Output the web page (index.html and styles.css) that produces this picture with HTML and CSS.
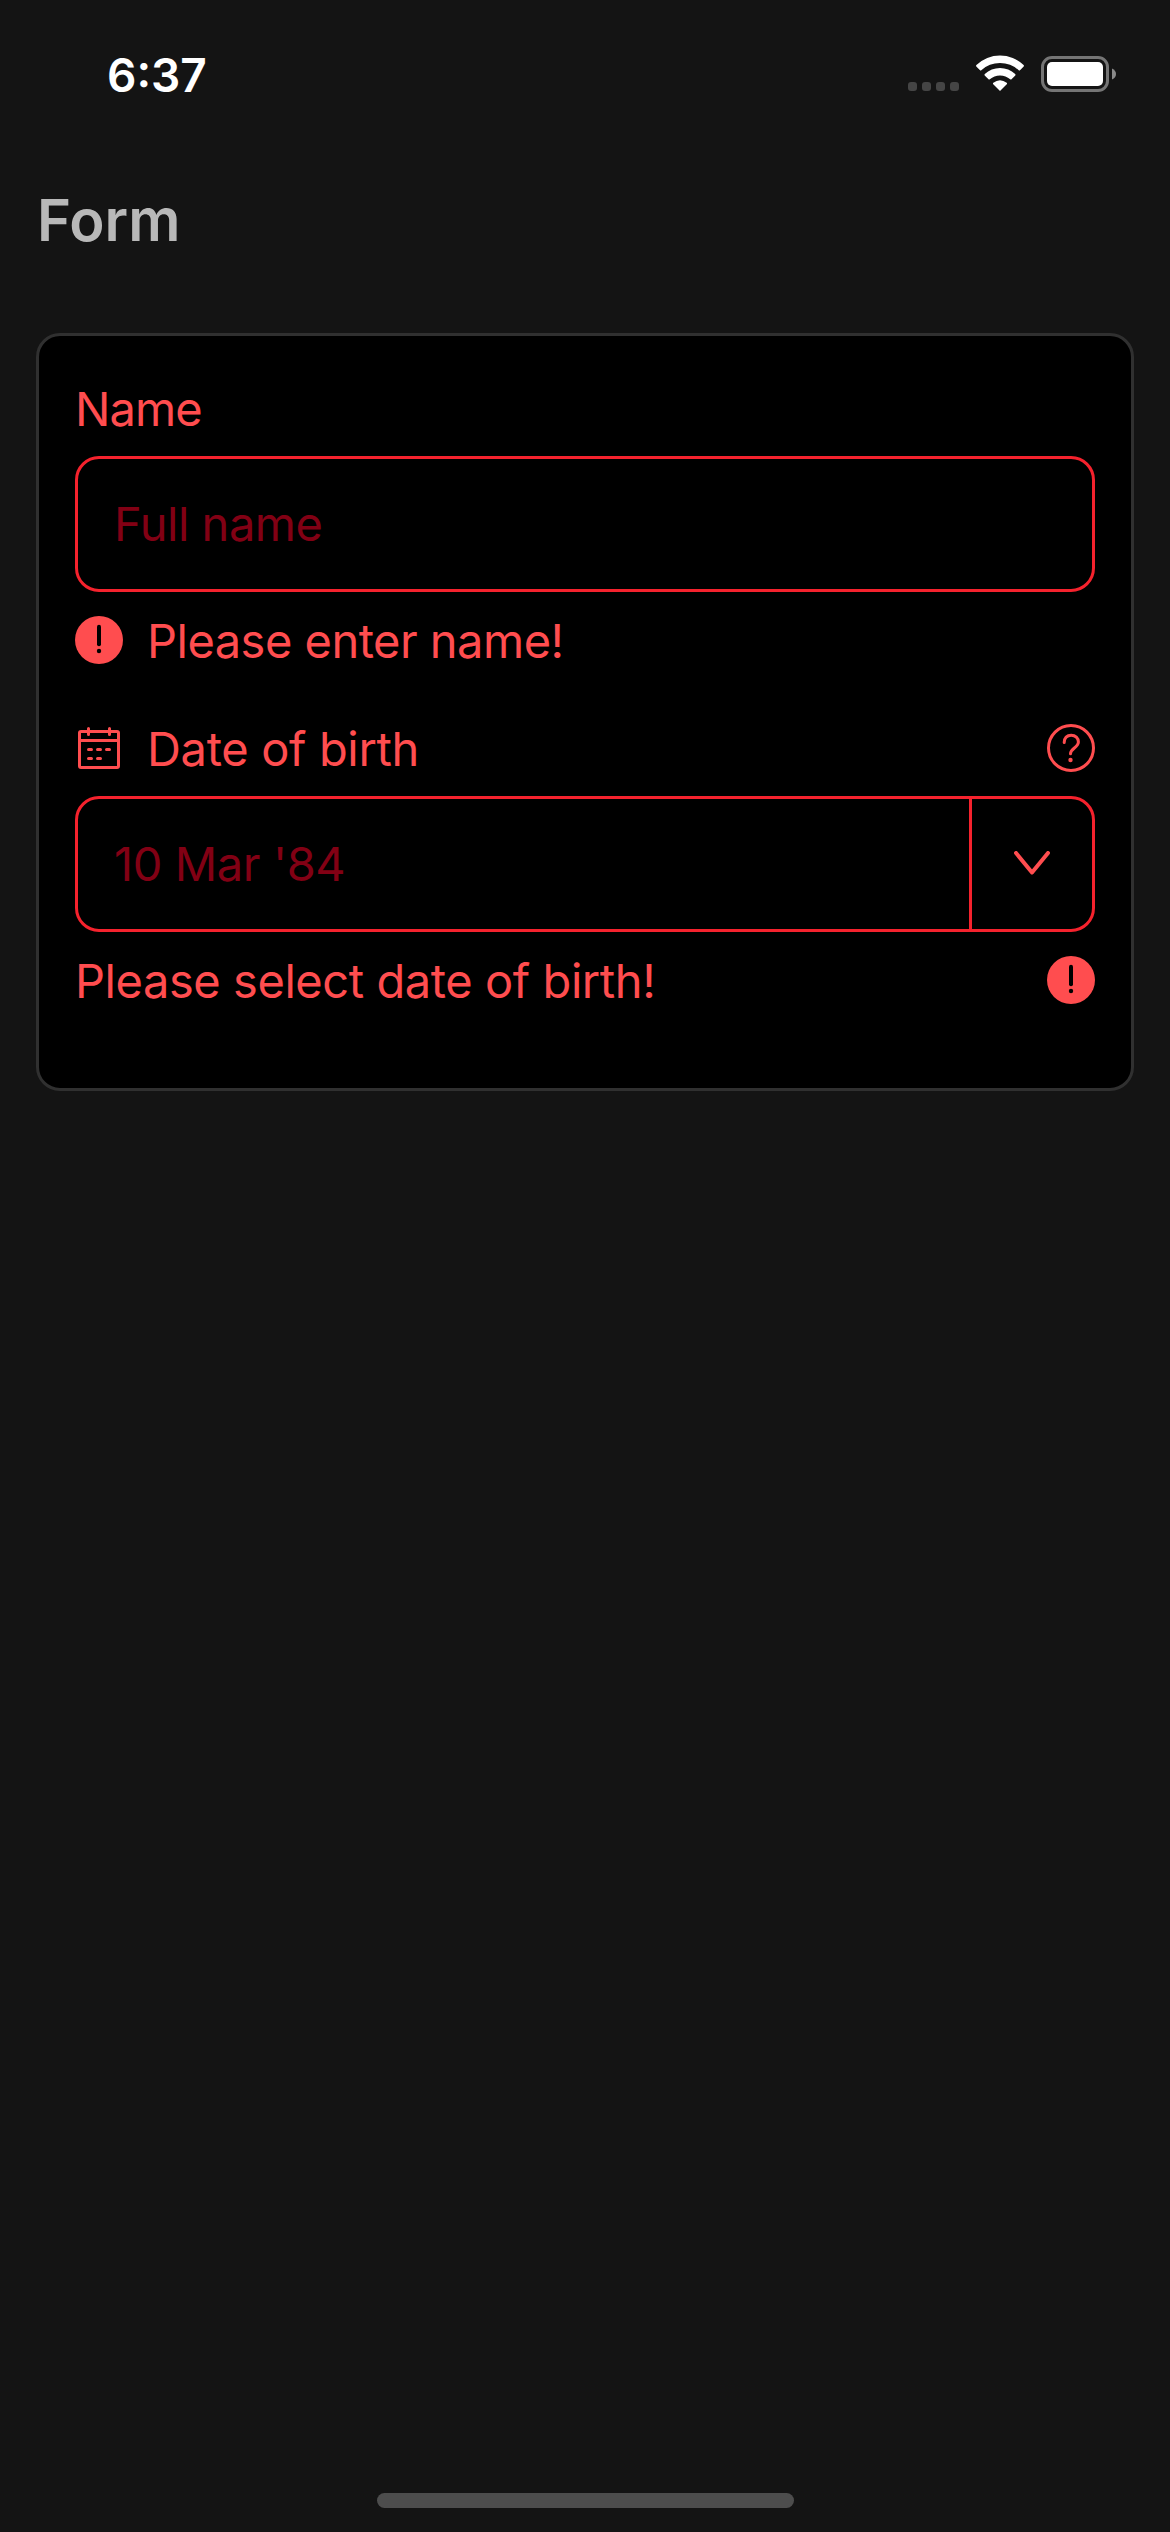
FILE: index.html
```html
<!DOCTYPE html>
<html lang="en">
<head>
<meta charset="utf-8">
<title>Form</title>
<link rel="stylesheet" href="styles.css">
</head>
<body>
<div class="screen">
  <header class="status-bar">
    <div class="time">6:37</div>
    <div class="status-icons">
      <svg class="signal" viewBox="0 0 51 9"><g fill="#454545"><rect width="9" height="9" rx="3"/><rect x="14" width="9" height="9" rx="3"/><rect x="28" width="9" height="9" rx="3"/><rect x="42" width="9" height="9" rx="3"/></g></svg>
      <svg class="wifi" viewBox="0 0 48 36"><g fill="#fff"><path d="M24 36 17 28.9Q16.700 28.300 17.300 27.800Q24 22.600 30.700 27.800Q31.300 28.300 31 28.900Z"/><path d="M8.700 20.500Q8.100 19.800 8.800 19.100A22 22 0 0 1 39.200 19.100Q39.900 19.800 39.300 20.500L35.500 24.300Q34.900 24.900 34.200 24.300A15.500 15.500 0 0 0 13.800 24.300Q13.100 24.900 12.500 24.300Z"/><path d="M.3 11.500Q-.3 10.800.4 10.100A34 34 0 0 1 47.600 10.100Q48.300 10.800 47.700 11.500L44 15.300Q43.400 15.900 42.700 15.300A27.500 27.500 0 0 0 5.300 15.300Q4.600 15.900 4 15.300Z"/></g></svg>
      <svg class="battery" viewBox="0 0 75 36"><rect x="1.500" y="1.500" width="65" height="33" rx="9.500" fill="none" stroke="#757575" stroke-width="3"/><rect x="6" y="6" width="56" height="24" rx="5" fill="#fff"/><path d="M71 12.500Q75 14.500 75 18T71 23.500Z" fill="#8a8a8a"/></svg>
    </div>
  </header>
  <h1 class="title">Form</h1>
  <main class="card">
    <section class="field">
      <div class="row"><span class="text label-name">Name</span></div>
      <div class="input"><span class="value placeholder-name">Full name</span></div>
      <div class="row">
        <svg class="icon" viewBox="0 0 48 48"><circle cx="24" cy="24" r="24" fill="#ff4d4f"/><path d="M24 10.800v17.500" stroke="#000" stroke-width="4" stroke-linecap="round"/><circle cx="24" cy="35" r="2.200" fill="#000"/></svg>
        <span class="text error-name">Please enter name!</span>
      </div>
    </section>
    <section class="field">
      <div class="row">
        <svg class="icon" viewBox="0 0 48 48" fill="none" stroke="#ff4d4f" stroke-width="3" stroke-linecap="round"><rect x="4.500" y="7.500" width="39" height="36" rx="1.500"/><path d="M4.500 16.500h39M13.500 4.500v6M34.500 4.500v6M13.500 25.500h3M22.500 25.500h3M31.500 25.500h3M13.500 34.500h3M22.500 34.500h3"/></svg>
        <span class="text label-date">Date of birth</span>
        <svg class="icon trailing" viewBox="0 0 48 48" fill="none" stroke="#ff4d4f" stroke-width="3" stroke-linecap="round"><circle cx="24" cy="24" r="22.500"/><path d="M17.200 18.500C17.200 14 20 11.200 24.200 11.200S31.400 14.200 31.400 18C31.400 23.500 23.500 24.500 23.500 29.700"/><circle cx="23.500" cy="36" r="2.200" fill="#ff4d4f" stroke="none"/></svg>
      </div>
      <div class="input">
        <span class="value placeholder-date">10 Mar '84</span>
        <span class="dropdown"><svg class="chevron" viewBox="0 0 36 24"><path d="M2 2 18 21.500 34 2" fill="none" stroke="#ff4d4f" stroke-width="4" stroke-linecap="round" stroke-linejoin="round"/></svg></span>
      </div>
      <div class="row">
        <span class="text error-date">Please select date of birth!</span>
        <svg class="icon trailing" viewBox="0 0 48 48"><circle cx="24" cy="24" r="24" fill="#ff4d4f"/><path d="M24 10.800v17.500" stroke="#000" stroke-width="4" stroke-linecap="round"/><circle cx="24" cy="35" r="2.200" fill="#000"/></svg>
      </div>
    </section>
  </main>
  <div class="home-indicator"></div>
</div>
</body>
</html>
```
FILE: styles.css
```css
* { box-sizing: border-box; }
body { margin: 0; background: #141414; font-family: Inter, "Liberation Sans", sans-serif; }
.screen { width: 1170px; height: 2532px; display: flex; flex-direction: column; }
.status-bar { height: 141px; padding: 45px 54px 0 107px; display: flex; justify-content: space-between; align-items: flex-start; }
.time { color: #fff; font-size: 46px; font-weight: 600; line-height: 60px; }
.status-icons { display: flex; align-items: flex-start; padding-top: 10px; }
.signal { width: 51px; height: 9px; margin: 27px 17px 0 0; }
.wifi { width: 48px; height: 36px; margin-right: 17px; }
.battery { width: 75px; height: 36px; margin-top: 1px; }
.title { margin: 0 36px 0 37px; height: 192px; padding-top: 43px; color: #b8b8b8; font-size: 58px; font-weight: 600; line-height: 72px; }
.card { margin: 0 36px; padding: 36px; border: 3px solid #303030; border-radius: 24px; background: #000; display: flex; flex-direction: column; }
.field { display: flex; flex-direction: column; gap: 12px; padding-bottom: 36px; }
.row { height: 72px; display: flex; align-items: center; gap: 24px; color: #ff4d4f; }
.text, .value { font-size: 47px; line-height: 72px; white-space: nowrap; }
.text { padding-top: 2px; }
.label-name { letter-spacing: -0.9px; }
.placeholder-name { letter-spacing: -0.47px; }
.error-name { letter-spacing: -0.51px; }
.label-date { letter-spacing: -0.34px; }
.placeholder-date { letter-spacing: -0.4px; }
.error-date { letter-spacing: -0.43px; }
.icon { width: 48px; height: 48px; flex: none; }
.trailing { margin-left: auto; }
.input { height: 136px; border: 3px solid #f5222d; border-radius: 24px; display: flex; align-items: center; }
.value { flex: 1; padding-left: 36px; color: #820014; }
.dropdown { width: 123px; height: 100%; padding-bottom: 2px; border-left: 3px solid #f5222d; display: flex; align-items: center; justify-content: center; }
.chevron { width: 36px; height: 24px; }
.home-indicator { width: 417px; height: 15px; margin: auto auto 24px; border-radius: 8px; background: #4d4d4d; }
```
